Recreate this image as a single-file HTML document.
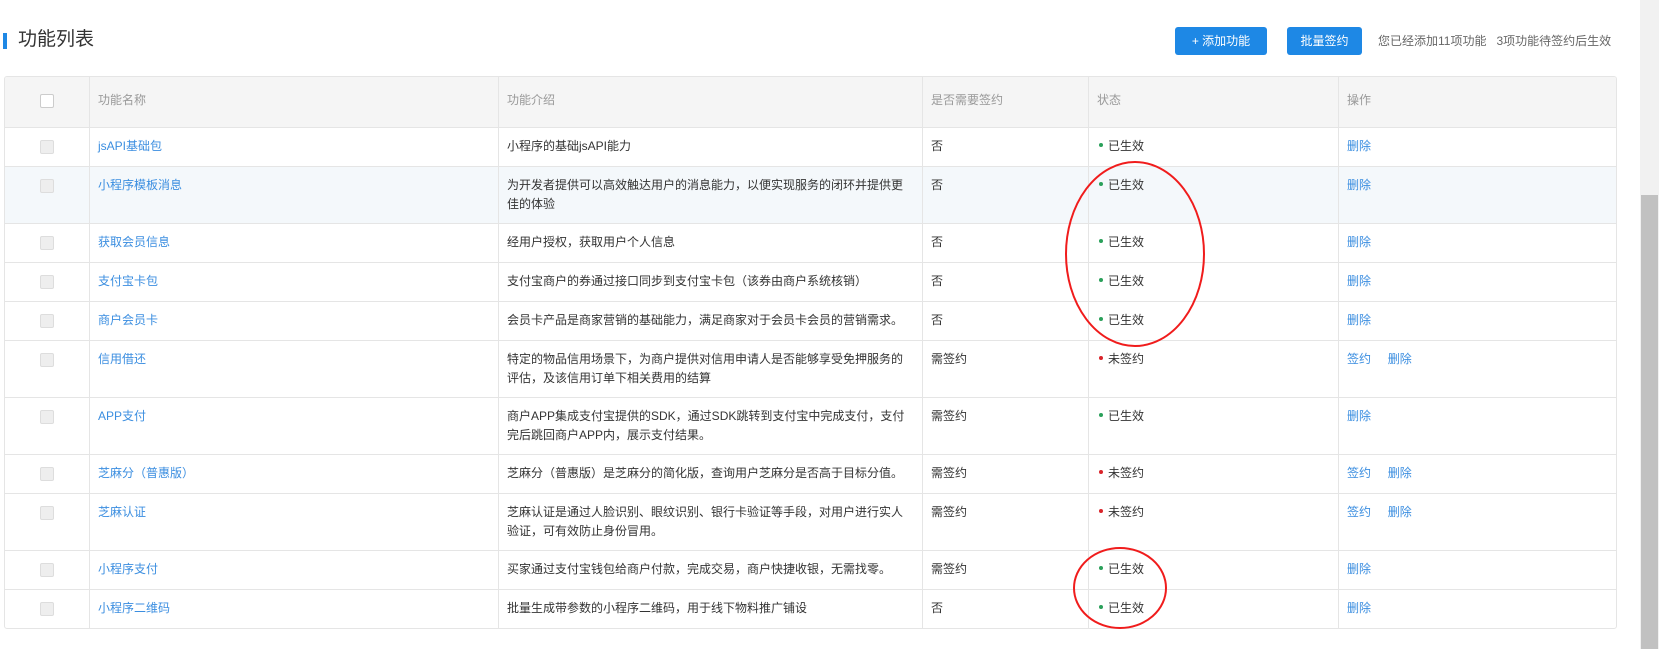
<!DOCTYPE html>
<html><head><meta charset="utf-8"><style>
*{margin:0;padding:0;box-sizing:border-box}
body{width:1659px;height:649px;overflow:hidden;background:#fff;font-family:"Liberation Sans","Noto Sans CJK SC",sans-serif;font-size:12px;color:#333;position:relative}
.bar{position:absolute;left:3px;top:33px;width:4px;height:16px;background:#1e88e5}
.title{position:absolute;left:18px;top:28px;font-size:19px;color:#333;line-height:24px}
.btn{position:absolute;top:27px;height:28px;line-height:28px;background:#1e88e5;color:#fff;border-radius:3px;text-align:center;font-size:12px}
.info{position:absolute;left:1378px;top:27px;line-height:28px;color:#666;font-size:12px;white-space:nowrap}
.tbl{position:absolute;left:4px;top:76px;width:1613px;border:1px solid #e5e5e5;border-radius:3px;overflow:hidden}
.row{position:relative;border-top:1px solid #e5e5e5;height:39px}
.row.h{background:#f5f5f5;border-top:none;height:50px;color:#999}
.row.d{height:57px}
.row.hl{background:#f4f8fb}
.c{position:absolute;top:0;bottom:0;border-left:1px solid #e5e5e5;padding:9px 0 0 8px;line-height:19px}
.h .c{padding-top:14px}
.cb{position:absolute;left:35px;top:12px;width:14px;height:14px;border:1px solid #ddd;border-radius:2px;background:#eee}
.h .cb{background:#fff;top:17px;border-color:#ccc}
a{color:#3b8ee0;text-decoration:none}
.dot{display:inline-block;width:4px;height:4px;border-radius:2px;margin-right:5px;vertical-align:middle;position:relative;top:-2px}
.g{background:#2aa05a}.r{background:#d9242a}
.sb{position:absolute;left:1640px;top:0;width:19px;height:649px;background:#f1f1f1}
.th{position:absolute;left:1641px;top:195px;width:17px;height:454px;background:#c1c1c1}
</style></head><body>
<div class="bar"></div><div class="title">功能列表</div>
<div class="btn" style="left:1175px;width:92px">+ 添加功能</div>
<div class="btn" style="left:1287px;width:75px">批量签约</div>
<div class="info">您已经添加11项功能&nbsp;&nbsp;&nbsp;3项功能待签约后生效</div>
<div class="tbl">
<div class="row h"><span class="cb"></span><div class="c" style="left:84px">功能名称</div><div class="c" style="left:493px">功能介绍</div><div class="c" style="left:917px">是否需要签约</div><div class="c" style="left:1083px">状态</div><div class="c" style="left:1333px">操作</div></div>

<div class="row"><span class="cb"></span><div class="c" style="left:84px"><a>jsAPI基础包</a></div><div class="c" style="left:493px;width:424px;padding-right:8px">小程序的基础jsAPI能力</div><div class="c" style="left:917px">否</div><div class="c" style="left:1083px;padding-left:10px"><span class="dot g"></span>已生效</div><div class="c" style="left:1333px"><a>删除</a></div></div>

<div class="row d hl"><span class="cb"></span><div class="c" style="left:84px"><a>小程序模板消息</a></div><div class="c" style="left:493px;width:424px;padding-right:8px">为开发者提供可以高效触达用户的消息能力，以便实现服务的闭环并提供更佳的体验</div><div class="c" style="left:917px">否</div><div class="c" style="left:1083px;padding-left:10px"><span class="dot g"></span>已生效</div><div class="c" style="left:1333px"><a>删除</a></div></div>

<div class="row"><span class="cb"></span><div class="c" style="left:84px"><a>获取会员信息</a></div><div class="c" style="left:493px;width:424px;padding-right:8px">经用户授权，获取用户个人信息</div><div class="c" style="left:917px">否</div><div class="c" style="left:1083px;padding-left:10px"><span class="dot g"></span>已生效</div><div class="c" style="left:1333px"><a>删除</a></div></div>

<div class="row"><span class="cb"></span><div class="c" style="left:84px"><a>支付宝卡包</a></div><div class="c" style="left:493px;width:424px;padding-right:8px">支付宝商户的券通过接口同步到支付宝卡包（该券由商户系统核销）</div><div class="c" style="left:917px">否</div><div class="c" style="left:1083px;padding-left:10px"><span class="dot g"></span>已生效</div><div class="c" style="left:1333px"><a>删除</a></div></div>

<div class="row"><span class="cb"></span><div class="c" style="left:84px"><a>商户会员卡</a></div><div class="c" style="left:493px;width:424px;padding-right:8px">会员卡产品是商家营销的基础能力，满足商家对于会员卡会员的营销需求。</div><div class="c" style="left:917px">否</div><div class="c" style="left:1083px;padding-left:10px"><span class="dot g"></span>已生效</div><div class="c" style="left:1333px"><a>删除</a></div></div>

<div class="row d"><span class="cb"></span><div class="c" style="left:84px"><a>信用借还</a></div><div class="c" style="left:493px;width:424px;padding-right:8px">特定的物品信用场景下，为商户提供对信用申请人是否能够享受免押服务的评估，及该信用订单下相关费用的结算</div><div class="c" style="left:917px">需签约</div><div class="c" style="left:1083px;padding-left:10px"><span class="dot r"></span>未签约</div><div class="c" style="left:1333px"><a>签约</a>&nbsp;&nbsp;&nbsp;&nbsp;&nbsp;<a>删除</a></div></div>

<div class="row d"><span class="cb"></span><div class="c" style="left:84px"><a>APP支付</a></div><div class="c" style="left:493px;width:424px;padding-right:8px">商户APP集成支付宝提供的SDK，通过SDK跳转到支付宝中完成支付，支付完后跳回商户APP内，展示支付结果。</div><div class="c" style="left:917px">需签约</div><div class="c" style="left:1083px;padding-left:10px"><span class="dot g"></span>已生效</div><div class="c" style="left:1333px"><a>删除</a></div></div>

<div class="row"><span class="cb"></span><div class="c" style="left:84px"><a>芝麻分（普惠版）</a></div><div class="c" style="left:493px;width:424px;padding-right:8px">芝麻分（普惠版）是芝麻分的简化版，查询用户芝麻分是否高于目标分值。</div><div class="c" style="left:917px">需签约</div><div class="c" style="left:1083px;padding-left:10px"><span class="dot r"></span>未签约</div><div class="c" style="left:1333px"><a>签约</a>&nbsp;&nbsp;&nbsp;&nbsp;&nbsp;<a>删除</a></div></div>

<div class="row d"><span class="cb"></span><div class="c" style="left:84px"><a>芝麻认证</a></div><div class="c" style="left:493px;width:424px;padding-right:8px">芝麻认证是通过人脸识别、眼纹识别、银行卡验证等手段，对用户进行实人验证，可有效防止身份冒用。</div><div class="c" style="left:917px">需签约</div><div class="c" style="left:1083px;padding-left:10px"><span class="dot r"></span>未签约</div><div class="c" style="left:1333px"><a>签约</a>&nbsp;&nbsp;&nbsp;&nbsp;&nbsp;<a>删除</a></div></div>

<div class="row"><span class="cb"></span><div class="c" style="left:84px"><a>小程序支付</a></div><div class="c" style="left:493px;width:424px;padding-right:8px">买家通过支付宝钱包给商户付款，完成交易，商户快捷收银，无需找零。</div><div class="c" style="left:917px">需签约</div><div class="c" style="left:1083px;padding-left:10px"><span class="dot g"></span>已生效</div><div class="c" style="left:1333px"><a>删除</a></div></div>

<div class="row"><span class="cb"></span><div class="c" style="left:84px"><a>小程序二维码</a></div><div class="c" style="left:493px;width:424px;padding-right:8px">批量生成带参数的小程序二维码，用于线下物料推广铺设</div><div class="c" style="left:917px">否</div><div class="c" style="left:1083px;padding-left:10px"><span class="dot g"></span>已生效</div><div class="c" style="left:1333px"><a>删除</a></div></div>
</div>
<svg style="position:absolute;left:0;top:0" width="1659" height="649"><ellipse cx="1135" cy="254" rx="69" ry="92" fill="none" stroke="#f01c1c" stroke-width="2"/><ellipse cx="1120" cy="588" rx="46" ry="40" fill="none" stroke="#f01c1c" stroke-width="2"/></svg>
<div class="sb"></div><div class="th"></div>
</body></html>
